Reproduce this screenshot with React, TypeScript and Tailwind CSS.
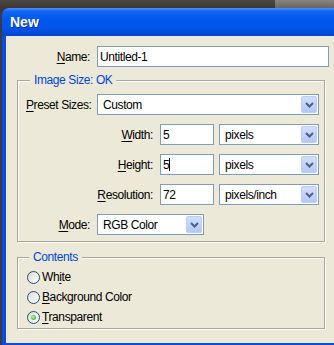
import React from "react";

function Chevron() {
  return (
    <svg width="9" height="6" viewBox="0 0 9 6">
      <path d="M1 1 L4.5 4.5 L8 1" fill="none" stroke="#4d6185" strokeWidth="2" />
    </svg>
  );
}

function Select({ value, w }: { value: string; w: string }) {
  return (
    <div className={`${w} h-[21px] border border-[#7f9db9] bg-white flex items-center`}>
      <span className="flex-1 pl-[5px] text-[12px] tracking-[-0.4px] leading-none text-black whitespace-nowrap">{value}</span>
      <div className="w-[16px] h-[17px] mr-[1px] rounded-[2px] border border-[#bccdf6] bg-gradient-to-b from-[#d2defc] to-[#b3c8f8] flex items-center justify-center">
        <Chevron />
      </div>
    </div>
  );
}

function Input({ value, w, caret }: { value: string; w: string; caret?: boolean }) {
  return (
    <div className={`${w} h-[21px] border border-[#7f9db9] bg-white flex items-center pl-[2px]`}>
      <span className="text-[12px] tracking-[-0.4px] leading-none text-black whitespace-nowrap">{value}</span>
      {caret && <span className="w-[1px] h-[13px] bg-black" />}
    </div>
  );
}

function Radio({ checked, children }: { checked?: boolean; children: React.ReactNode }) {
  return (
    <div className="h-[20px] flex items-center">
      <div className="w-[13px] h-[13px] rounded-full border border-[#1c5180] bg-gradient-to-br from-[#dcdcd4] to-white flex items-center justify-center">
        {checked && (
          <div className="w-[5px] h-[5px] rounded-full bg-[radial-gradient(circle_at_40%_40%,#b8f0a8,#21a121)]" />
        )}
      </div>
      <span className="ml-[2px] text-[12px] tracking-[-0.4px] leading-none text-black whitespace-nowrap">{children}</span>
    </div>
  );
}

const U = ({ children }: { children: React.ReactNode }) => (
  <span className="underline underline-offset-[2px]">{children}</span>
);

const lbl = "text-[12px] tracking-[-0.4px] leading-none text-black whitespace-nowrap";

export default function App() {
  return (
    <div className="w-[334px] h-[345px] overflow-hidden bg-[#3c3a3a] flex flex-col font-['Liberation_Sans',Arial,sans-serif]">
      <div className="h-[8px] flex shrink-0">
        <div className="flex-1 bg-gradient-to-b from-[#4a4745] to-[#3a3836]" />
        <div className="w-[59px] bg-gradient-to-b from-[#8a847e] to-[#6b6661]" />
      </div>
      <div className="flex flex-1">
        <div className="w-[2px] bg-[#3a3a42]" />
        <div className="flex-1 flex flex-col rounded-tl-[7px] overflow-hidden">
          <div className="h-[28px] shrink-0 flex items-center pl-[8px] bg-[linear-gradient(to_bottom,#4a8ffd_0%,#1266f1_12%,#0058ee_40%,#0155ea_70%,#0044d2_100%)]">
            <span className="text-white font-bold text-[14px] leading-none [text-shadow:1px_1px_0_#0a2a9c]">New</span>
          </div>
          <div className="flex-1 border-l-[4px] border-b-[2px] border-[#0b4ce0] bg-[#ece9d8] flex flex-col">
            <div className="mt-[10px] flex items-center">
              <span className={`w-[84px] text-right ${lbl}`}>
                <U>N</U>ame:
              </span>
              <div className="ml-[7px]">
                <Input value="Untitled-1" w="w-[232px]" />
              </div>
            </div>

            <fieldset className="mt-[6px] ml-[11px] w-[308px] border border-[#aca899] shadow-[inset_1px_1px_0_#fff,1px_1px_0_#fff] pl-[8px] pr-[4px] pt-[7px] pb-[6px]">
              <legend className="ml-[4px] px-[4px] bg-[#ece9d8] text-[12px] tracking-[-0.4px] leading-[14px] text-[#0046d5]">
                Image Size: OK
              </legend>
              <div className="flex flex-col gap-[9px]">
                <div className="flex items-center h-[21px]">
                  <span className={`w-[64px] ${lbl}`}>
                    <U>P</U>reset Sizes:
                  </span>
                  <div className="ml-[7px]">
                    <Select value="Custom" w="w-[222px]" />
                  </div>
                </div>
                <div className="flex items-center h-[21px]">
                  <span className={`w-[127px] text-right ${lbl}`}>
                    <U>W</U>idth:
                  </span>
                  <div className="ml-[7px]">
                    <Input value="5" w="w-[54px]" />
                  </div>
                  <div className="ml-[5px]">
                    <Select value="pixels" w="w-[100px]" />
                  </div>
                </div>
                <div className="flex items-center h-[21px]">
                  <span className={`w-[127px] text-right ${lbl}`}>
                    <U>H</U>eight:
                  </span>
                  <div className="ml-[7px]">
                    <Input value="5" w="w-[54px]" caret />
                  </div>
                  <div className="ml-[5px]">
                    <Select value="pixels" w="w-[100px]" />
                  </div>
                </div>
                <div className="flex items-center h-[21px]">
                  <span className={`w-[127px] text-right ${lbl}`}>
                    <U>R</U>esolution:
                  </span>
                  <div className="ml-[7px]">
                    <Input value="72" w="w-[54px]" />
                  </div>
                  <div className="ml-[5px]">
                    <Select value="pixels/inch" w="w-[100px]" />
                  </div>
                </div>
                <div className="flex items-center h-[21px]">
                  <span className={`w-[64px] text-right ${lbl}`}>
                    <U>M</U>ode:
                  </span>
                  <div className="ml-[7px]">
                    <Select value="RGB Color" w="w-[107px]" />
                  </div>
                </div>
              </div>
            </fieldset>

            <fieldset className="mt-[8px] ml-[11px] w-[308px] border border-[#aca899] shadow-[inset_1px_1px_0_#fff,1px_1px_0_#fff] pl-[9px] pr-[4px] pt-[3px] pb-[1px]">
              <legend className="ml-[2px] px-[4px] bg-[#ece9d8] text-[12px] tracking-[-0.4px] leading-[14px] text-[#0046d5]">
                Contents
              </legend>
              <Radio>
                Wh<U>i</U>te
              </Radio>
              <Radio>
                <U>B</U>ackground Color
              </Radio>
              <Radio checked>
                <U>T</U>ransparent
              </Radio>
            </fieldset>
          </div>
        </div>
      </div>
    </div>
  );
}
